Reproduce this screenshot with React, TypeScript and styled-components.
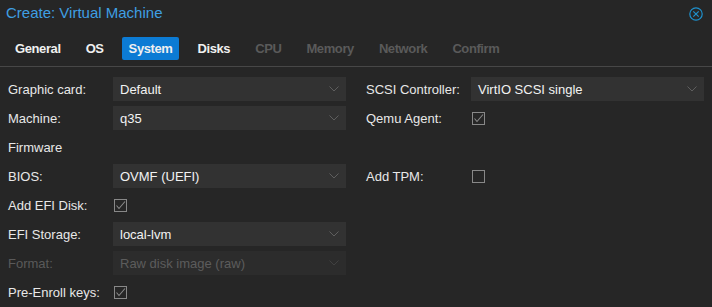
import React from "react";
import styled, { createGlobalStyle } from "styled-components";

const Global = createGlobalStyle`
  html, body { margin: 0; padding: 0; background: #262626; }
  body { font-family: "Liberation Sans", Arial, Helvetica, sans-serif; }
`;

const Window = styled.div`
  width: 712px;
  height: 307px;
  background: #262626;
  display: flex;
  flex-direction: column;
  overflow: hidden;
`;

const Header = styled.div`
  height: 26px;
  display: flex;
  align-items: center;
  justify-content: space-between;
  padding: 0 9px 0 6px;
`;

const Title = styled.div`
  font-size: 15px;
  color: #3f9fe2;
  padding-bottom: 1px;
`;

const CloseBtn = styled.div`
  width: 14px;
  height: 14px;
  display: flex;
  margin-top: 1px;
`;

const TabBar = styled.div`
  display: flex;
  align-items: flex-start;
  gap: 11px;
  padding: 11px 8px 0;
  border-bottom: 1px solid #474747;
  box-sizing: border-box;
  height: 41px;
`;

const Tab = styled.div<{ $active?: boolean; $disabled?: boolean }>`
  height: 23px;
  padding: 0 7px;
  display: flex;
  align-items: center;
  font-size: 13px;
  font-weight: bold;
  letter-spacing: -0.4px;
  border-radius: 2px;
  background: ${(p) => (p.$active ? "#0c7bd4" : "transparent")};
  color: ${(p) => (p.$disabled ? "#5a5a5a" : "#f0f0f0")};
`;

const Form = styled.div`
  display: grid;
  grid-template-columns: 338px 338px;
  column-gap: 20px;
  padding: 10px 8px 0;
`;

const Column = styled.div`
  display: flex;
  flex-direction: column;
  gap: 5px;
`;

const Row = styled.div`
  height: 24px;
  display: flex;
  align-items: center;
`;

const Label = styled.div<{ $disabled?: boolean }>`
  width: 105px;
  flex: none;
  font-size: 13px;
  color: ${(p) => (p.$disabled ? "#5a5a5a" : "#e8e8e8")};
`;

const Combo = styled.div<{ $disabled?: boolean }>`
  flex: 1;
  height: 24px;
  display: flex;
  align-items: center;
  justify-content: space-between;
  padding: 0 7px;
  box-sizing: border-box;
  background: ${(p) => (p.$disabled ? "#2c2c2c" : "#323232")};
  color: ${(p) => (p.$disabled ? "#5c5c5c" : "#f2f2f2")};
  font-size: 13px;
`;

const Chevron = styled.svg`
  width: 10px;
  height: 6px;
  flex: none;
`;

const Check = styled.div`
  width: 13px;
  height: 13px;
  margin-left: 1px;
  box-sizing: border-box;
  border: 1px solid #888;
  display: flex;
`;

const ComboField = ({ value, disabled }: { value: string; disabled?: boolean }) => (
  <Combo $disabled={disabled}>
    <span>{value}</span>
    <Chevron viewBox="0 0 10 6">
      <path d="M0.5 0.5 L5 5 L9.5 0.5" fill="none" stroke={disabled ? "#404040" : "#5e5e5e"} strokeWidth="1" />
    </Chevron>
  </Combo>
);

const Checkbox = ({ checked }: { checked?: boolean }) => (
  <Check>
    {checked && (
      <svg width="11" height="11" viewBox="0 0 11 11">
        <path d="M1.5 5.5 L4 8.5 L10 1.5" fill="none" stroke="#8a8a8a" strokeWidth="1.1" />
      </svg>
    )}
  </Check>
);

const tabs: { name: string; active?: boolean; disabled?: boolean }[] = [
  { name: "General" },
  { name: "OS" },
  { name: "System", active: true },
  { name: "Disks" },
  { name: "CPU", disabled: true },
  { name: "Memory", disabled: true },
  { name: "Network", disabled: true },
  { name: "Confirm", disabled: true },
];

export default function App() {
  return (
    <Window>
      <Global />
      <Header>
        <Title>Create: Virtual Machine</Title>
        <CloseBtn>
          <svg width="14" height="14" viewBox="0 0 14 14">
            <circle cx="7" cy="7" r="6.2" fill="none" stroke="#1e90cc" strokeWidth="1.2" />
            <path d="M4.3 4.3 L9.7 9.7 M9.7 4.3 L4.3 9.7" stroke="#1e90cc" strokeWidth="1.2" />
          </svg>
        </CloseBtn>
      </Header>
      <TabBar>
        {tabs.map((t) => (
          <Tab key={t.name} $active={t.active} $disabled={t.disabled}>
            {t.name}
          </Tab>
        ))}
      </TabBar>
      <Form>
        <Column>
          <Row>
            <Label>Graphic card:</Label>
            <ComboField value="Default" />
          </Row>
          <Row>
            <Label>Machine:</Label>
            <ComboField value="q35" />
          </Row>
          <Row>
            <Label>Firmware</Label>
          </Row>
          <Row>
            <Label>BIOS:</Label>
            <ComboField value="OVMF (UEFI)" />
          </Row>
          <Row>
            <Label>Add EFI Disk:</Label>
            <Checkbox checked />
          </Row>
          <Row>
            <Label>EFI Storage:</Label>
            <ComboField value="local-lvm" />
          </Row>
          <Row>
            <Label $disabled>Format:</Label>
            <ComboField value="Raw disk image (raw)" disabled />
          </Row>
          <Row>
            <Label>Pre-Enroll keys:</Label>
            <Checkbox checked />
          </Row>
        </Column>
        <Column>
          <Row>
            <Label>SCSI Controller:</Label>
            <ComboField value="VirtIO SCSI single" />
          </Row>
          <Row>
            <Label>Qemu Agent:</Label>
            <Checkbox checked />
          </Row>
          <Row />
          <Row>
            <Label>Add TPM:</Label>
            <Checkbox />
          </Row>
        </Column>
      </Form>
    </Window>
  );
}
